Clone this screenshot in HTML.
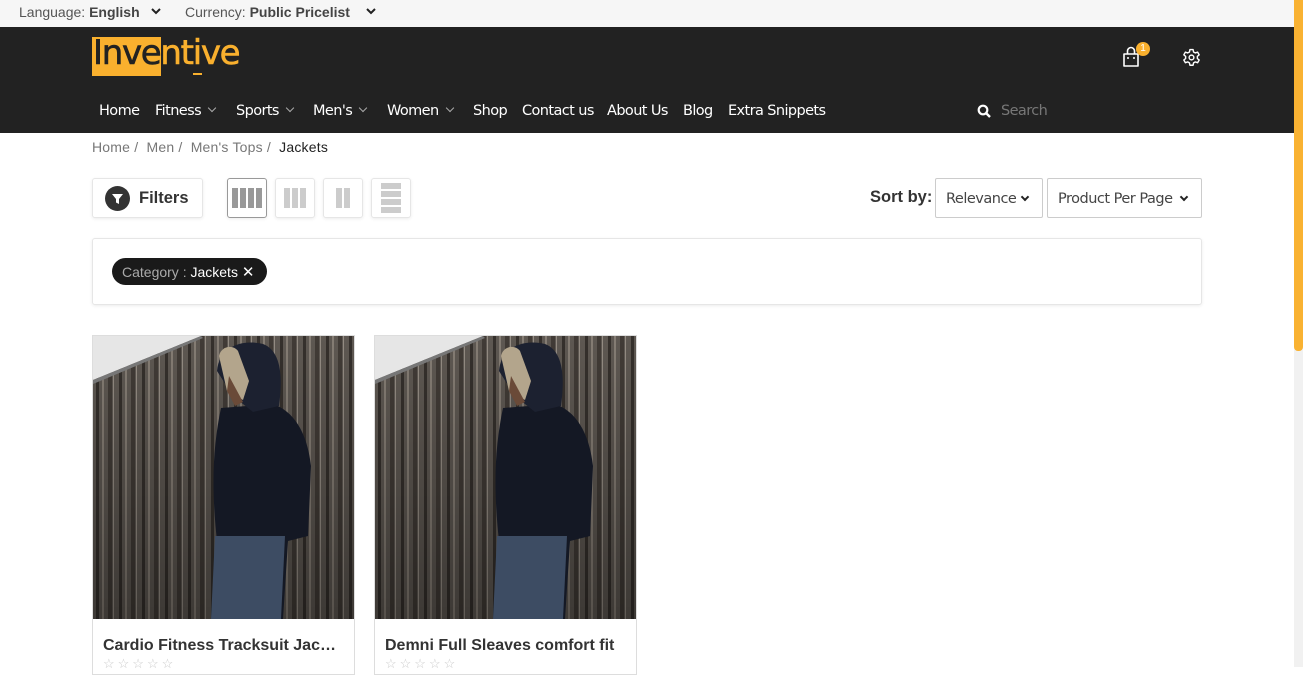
<!DOCTYPE html>
<html><head><meta charset="utf-8"><style>
*{margin:0;padding:0;box-sizing:border-box}
body{width:1303px;height:667px;overflow:hidden;background:#fff;font-family:"Liberation Sans",sans-serif;position:relative}
.top{position:absolute;left:0;top:0;width:1294px;height:27px;background:#f6f6f6;font-size:14px;color:#555}
.top span{position:absolute;top:4px}
.hdr{position:absolute;left:0;top:27px;width:1294px;height:106px;background:#222}
.abs{position:absolute}
.nav{position:absolute;top:103px;color:#fff;font-size:14.5px;font-family:"DejaVu Sans","Liberation Sans",sans-serif;letter-spacing:-0.6px}
.chev{display:inline-block;width:6px;height:6px;border-right:1.6px solid #aaa;border-bottom:1.6px solid #aaa;transform:rotate(45deg);margin-left:8px;position:relative;top:-4px}
.bc{position:absolute;top:139px;font-size:14px;color:#777;letter-spacing:0.2px}
.box{position:absolute;border:1px solid #e6e6e6;border-radius:3px;background:#fff;box-shadow:0 1px 3px rgba(0,0,0,.08)}
.sel{position:absolute;top:178px;height:40px;border:1px solid #ccc;border-radius:2px;font-size:14.5px;color:#444;font-family:"DejaVu Sans",sans-serif;letter-spacing:-0.5px;padding:12px 0 0 10px}
.dchev{display:inline-block;width:6px;height:6px;border-right:2px solid #222;border-bottom:2px solid #222;transform:rotate(45deg);position:absolute;top:15px}
.card{position:absolute;top:335px;width:263px;height:340px;border:1px solid #ddd;background:#fff}
.card .t{position:absolute;left:10px;top:301px;font-size:16px;font-weight:bold;color:#333;white-space:nowrap}
.card .s{position:absolute;left:10px;top:320px;font-size:13px;color:#ccc;letter-spacing:3px}
</style></head><body>
<div class="top">
<span style="left:19px">Language: <b style="color:#444">English</b></span>
<span style="left:185px">Currency: <b style="color:#444">Public Pricelist</b></span>
</div>
<svg class="abs" style="left:150px;top:6px" width="12" height="10"><path d="M2 3l4 4 4-4" stroke="#222" stroke-width="2" fill="none"/></svg>
<svg class="abs" style="left:365px;top:6px" width="12" height="10"><path d="M2 3l4 4 4-4" stroke="#222" stroke-width="2" fill="none"/></svg>
<div class="hdr"></div>
<div class="abs" style="left:92px;top:37px;width:69px;height:39px;background:#f9b02e"></div>
<div class="abs" style="left:93px;top:33px;font-size:34px;font-family:'DejaVu Sans',sans-serif;letter-spacing:-1.3px;color:#f9b02e;-webkit-text-stroke:0.6px currentColor"><span style="color:#222">Inve</span>ntive</div>
<div class="abs" style="left:193px;top:73px;width:9px;height:2px;background:#f9b02e"></div>
<div class="nav" style="left:99px">Home</div>
<div class="nav" style="left:155px">Fitness<i class="chev"></i></div>
<div class="nav" style="left:236px">Sports<i class="chev"></i></div>
<div class="nav" style="left:313px">Men's<i class="chev"></i></div>
<div class="nav" style="left:387px">Women<i class="chev"></i></div>
<div class="nav" style="left:473px">Shop</div>
<div class="nav" style="left:522px">Contact us</div>
<div class="nav" style="left:607px">About Us</div>
<div class="nav" style="left:683px">Blog</div>
<div class="nav" style="left:728px">Extra Snippets</div>
<svg class="abs" style="left:977px;top:104px" width="14" height="14"><circle cx="6" cy="6" r="4.3" stroke="#fff" stroke-width="2.2" fill="none"/><path d="M9 9l4 4" stroke="#fff" stroke-width="2.4"/></svg>
<div class="nav" style="left:1001px;color:#777">Search</div>
<svg class="abs" style="left:1122px;top:46px" width="20" height="22"><path d="M2 8h14v12H2z" stroke="#fff" stroke-width="1.6" fill="none" stroke-linejoin="round"/><path d="M5.5 8V5a3.5 3.5 0 0 1 7 0v3" stroke="#fff" stroke-width="1.6" fill="none"/><circle cx="6" cy="12" r="1" fill="#fff"/><circle cx="12" cy="12" r="1" fill="#fff"/></svg>
<div class="abs" style="left:1136px;top:42px;width:14px;height:14px;border-radius:7px;background:#f9b02e;color:#fff;font-size:10px;text-align:center;line-height:14px">1</div>
<svg class="abs" style="left:1182px;top:48px" width="19" height="19" viewBox="0 0 24 24"><path d="M10 2h4l.6 3 2.2 1.2 2.9-1 2 3.4-2.3 2 .0 2.6 2.3 2-2 3.4-2.9-1-2.2 1.2-.6 3h-4l-.6-3-2.2-1.2-2.9 1-2-3.4 2.3-2v-2.6l-2.3-2 2-3.4 2.9 1L9.4 5z" stroke="#fff" stroke-width="1.8" fill="none" stroke-linejoin="round"/><circle cx="12" cy="12" r="3" stroke="#fff" stroke-width="1.8" fill="none"/></svg>
<div class="bc" style="left:92px">Home /&nbsp; Men /&nbsp; Men's Tops /&nbsp; <span style="color:#222">Jackets</span></div>
<div class="box" style="left:92px;top:178px;width:111px;height:40px"></div>
<svg class="abs" style="left:105px;top:186px" width="25" height="25"><circle cx="12.5" cy="12.5" r="12.5" fill="#333"/><path d="M7 8h11l-4 5v5l-3-1.5V13z" fill="#fff"/></svg>
<div class="abs" style="left:139px;top:189px;font-size:16.5px;font-weight:bold;color:#333">Filters</div>
<div class="box" style="left:227px;top:178px;width:40px;height:40px;border-color:#999"></div>
<div class="abs" style="left:232px;top:188px;width:30px;height:20px;background:repeating-linear-gradient(90deg,#999 0 6px,transparent 6px 8px)"></div>
<div class="box" style="left:275px;top:178px;width:40px;height:40px"></div>
<div class="abs" style="left:284px;top:188px;width:22px;height:20px;background:repeating-linear-gradient(90deg,#ccc 0 6px,transparent 6px 8px)"></div>
<div class="box" style="left:323px;top:178px;width:40px;height:40px"></div>
<div class="abs" style="left:336px;top:188px;width:14px;height:20px;background:repeating-linear-gradient(90deg,#ccc 0 6px,transparent 6px 8px)"></div>
<div class="box" style="left:371px;top:178px;width:40px;height:40px"></div>
<div class="abs" style="left:381px;top:183px;width:20px;height:30px;background:repeating-linear-gradient(180deg,#ccc 0 6px,transparent 6px 8px)"></div>
<div class="abs" style="left:870px;top:188px;font-size:16.5px;font-weight:bold;color:#333">Sort by:</div>
<div class="sel" style="left:935px;width:108px">Relevance<i class="dchev" style="left:86px"></i></div>
<div class="sel" style="left:1047px;width:155px">Product Per Page<i class="dchev" style="left:133px"></i></div>
<div class="box" style="left:92px;top:238px;width:1110px;height:67px"></div>
<div class="abs" style="left:112px;top:258px;width:155px;height:27px;border-radius:14px;background:#1a1a1a;font-size:14px;color:#aaa;padding:5px 0 0 10px">Category : <span style="color:#fff">Jackets</span> <span style="color:#fff;font-size:15px">&#x2715;</span></div>
<svg width="0" height="0" style="position:absolute"><defs>
<linearGradient id="shade" x1="0" y1="0" x2="0" y2="1"><stop offset="0" stop-color="#000" stop-opacity="0"/><stop offset="1" stop-color="#000" stop-opacity="0.35"/></linearGradient>
<pattern id="wood" width="23" height="283" patternUnits="userSpaceOnUse"><rect width="23" height="283" fill="#5e5852"/><rect x="3" width="3" height="283" fill="#35302c"/><rect x="9" width="2" height="283" fill="#857d74"/><rect x="15" width="4" height="283" fill="#413b36"/><rect x="20" width="1" height="283" fill="#948c83"/></pattern>
<g id="img">
<rect width="261" height="283" fill="url(#wood)"/>
<rect width="261" height="283" fill="url(#shade)"/>
<path d="M0 0H108L0 44z" fill="#e6e6e6"/>
<path d="M108 0L0 44V48L110 2z" fill="#777"/>
<path d="M128 72C120 110 118 150 124 205L120 283H190L195 205L215 200L218 130C214 95 200 75 180 68z" fill="#141824"/>
<path d="M122 200L118 283H188L192 200z" fill="#3d4c63"/>
<path d="M124 35C126 10 150 3 170 8C188 15 190 40 186 70L160 76L140 60z" fill="#1c2130"/>
<path d="M126 20C128 10 140 8 145 15L156 45L150 64L134 55z" fill="#b3a58c"/>
<path d="M136 40L150 66L142 70L134 55z" fill="#6a4a38"/>
</g>
</defs></svg>
<div class="card" style="left:92px"><svg style="position:absolute;left:0;top:0" width="261" height="284"><use href="#img"/></svg><div class="t">Cardio Fitness Tracksuit Jac…</div><div class="s">☆☆☆☆☆</div></div>
<div class="card" style="left:374px"><svg style="position:absolute;left:0;top:0" width="261" height="284"><use href="#img"/></svg><div class="t">Demni Full Sleaves comfort fit</div><div class="s">☆☆☆☆☆</div></div>
<div class="abs" style="left:1294px;top:0;width:9px;height:667px;background:#f1f1f1"></div>
<div class="abs" style="left:1294px;top:0;width:9px;height:351px;background:#f9b232;border-radius:0 0 4px 4px"></div>
</body></html>
